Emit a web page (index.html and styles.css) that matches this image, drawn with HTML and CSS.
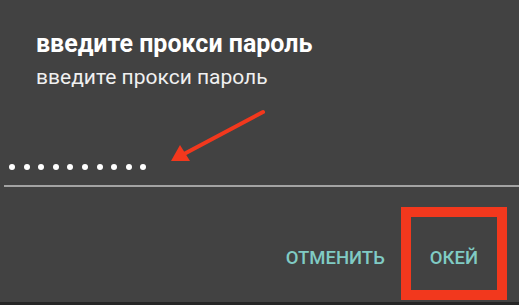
FILE: index.html
```html
<!DOCTYPE html>
<html lang="ru">
<head>
<meta charset="UTF-8">
<meta name="viewport" content="width=device-width, initial-scale=1.0">
<title>Прокси</title>
<link rel="stylesheet" href="styles.css">
</head>
<body>
<div class="dialog">
  <div class="dialog-head">
    <div class="title">введите прокси пароль</div>
    <div class="subtitle">введите прокси пароль</div>
  </div>
  <div class="field">
    <div class="dots">
      <span class="dot"></span><span class="dot"></span><span class="dot"></span><span class="dot"></span><span class="dot"></span>
      <span class="dot"></span><span class="dot"></span><span class="dot"></span><span class="dot"></span><span class="dot"></span>
    </div>
  </div>
  <div class="actions">
    <span class="btn">ОТМЕНИТЬ</span>
    <span class="btn btn-ok">ОКЕЙ</span>
  </div>
</div>
<div class="bottom-strip"></div>

<!-- annotation overlays -->
<svg class="arrow" width="519" height="305" viewBox="0 0 519 305">
  <line x1="263" y1="112" x2="184" y2="154" stroke="#f2381d" stroke-width="4" stroke-linecap="round"/>
  <polygon points="171,161 180,145 190,161" fill="#f2381d"/>
</svg>
<div class="highlight"></div>
</body>
</html>
```

FILE: styles.css
```css
body {
  margin: 0;
  height: 305px;
  overflow: hidden;
  background-color: #424242;
  font-family: Roboto, 'Noto Sans', sans-serif;
  color: #fff;
  position: relative;
}

.dialog {
  display: flex;
  flex-direction: column;
  height: 302px;
}

.dialog-head {
  padding: 29px 0 0 36px;
}

.title {
  font-size: 25px;
  line-height: 30px;
  font-weight: 700;
}

.subtitle {
  font-size: 21px;
  line-height: 24px;
  margin-top: 6px;
  color: #f0f0f0;
}

.field {
  margin: 75px 0 0 4px;
  border-bottom: 2px solid #a3a3a3;
  padding: 0 0 15px 5px;
}

.dots {
  display: flex;
  gap: 8.6px;
}

.dot {
  width: 6px;
  height: 6px;
  border-radius: 50%;
  background-color: #fff;
}

.actions {
  display: flex;
  justify-content: flex-end;
  gap: 45px;
  padding: 60px 41px 0 0;
}

.btn {
  font-size: 18.5px;
  line-height: 22px;
  font-weight: 500;
  color: #80cbc4;
}

.bottom-strip {
  height: 3px;
  background-color: #262626;
}

.arrow {
  position: absolute;
  left: 0;
  top: 0;
}

.highlight {
  position: absolute;
  left: 401px;
  top: 207px;
  width: 86px;
  height: 73px;
  border: 10px solid #f2381d;
}
```
